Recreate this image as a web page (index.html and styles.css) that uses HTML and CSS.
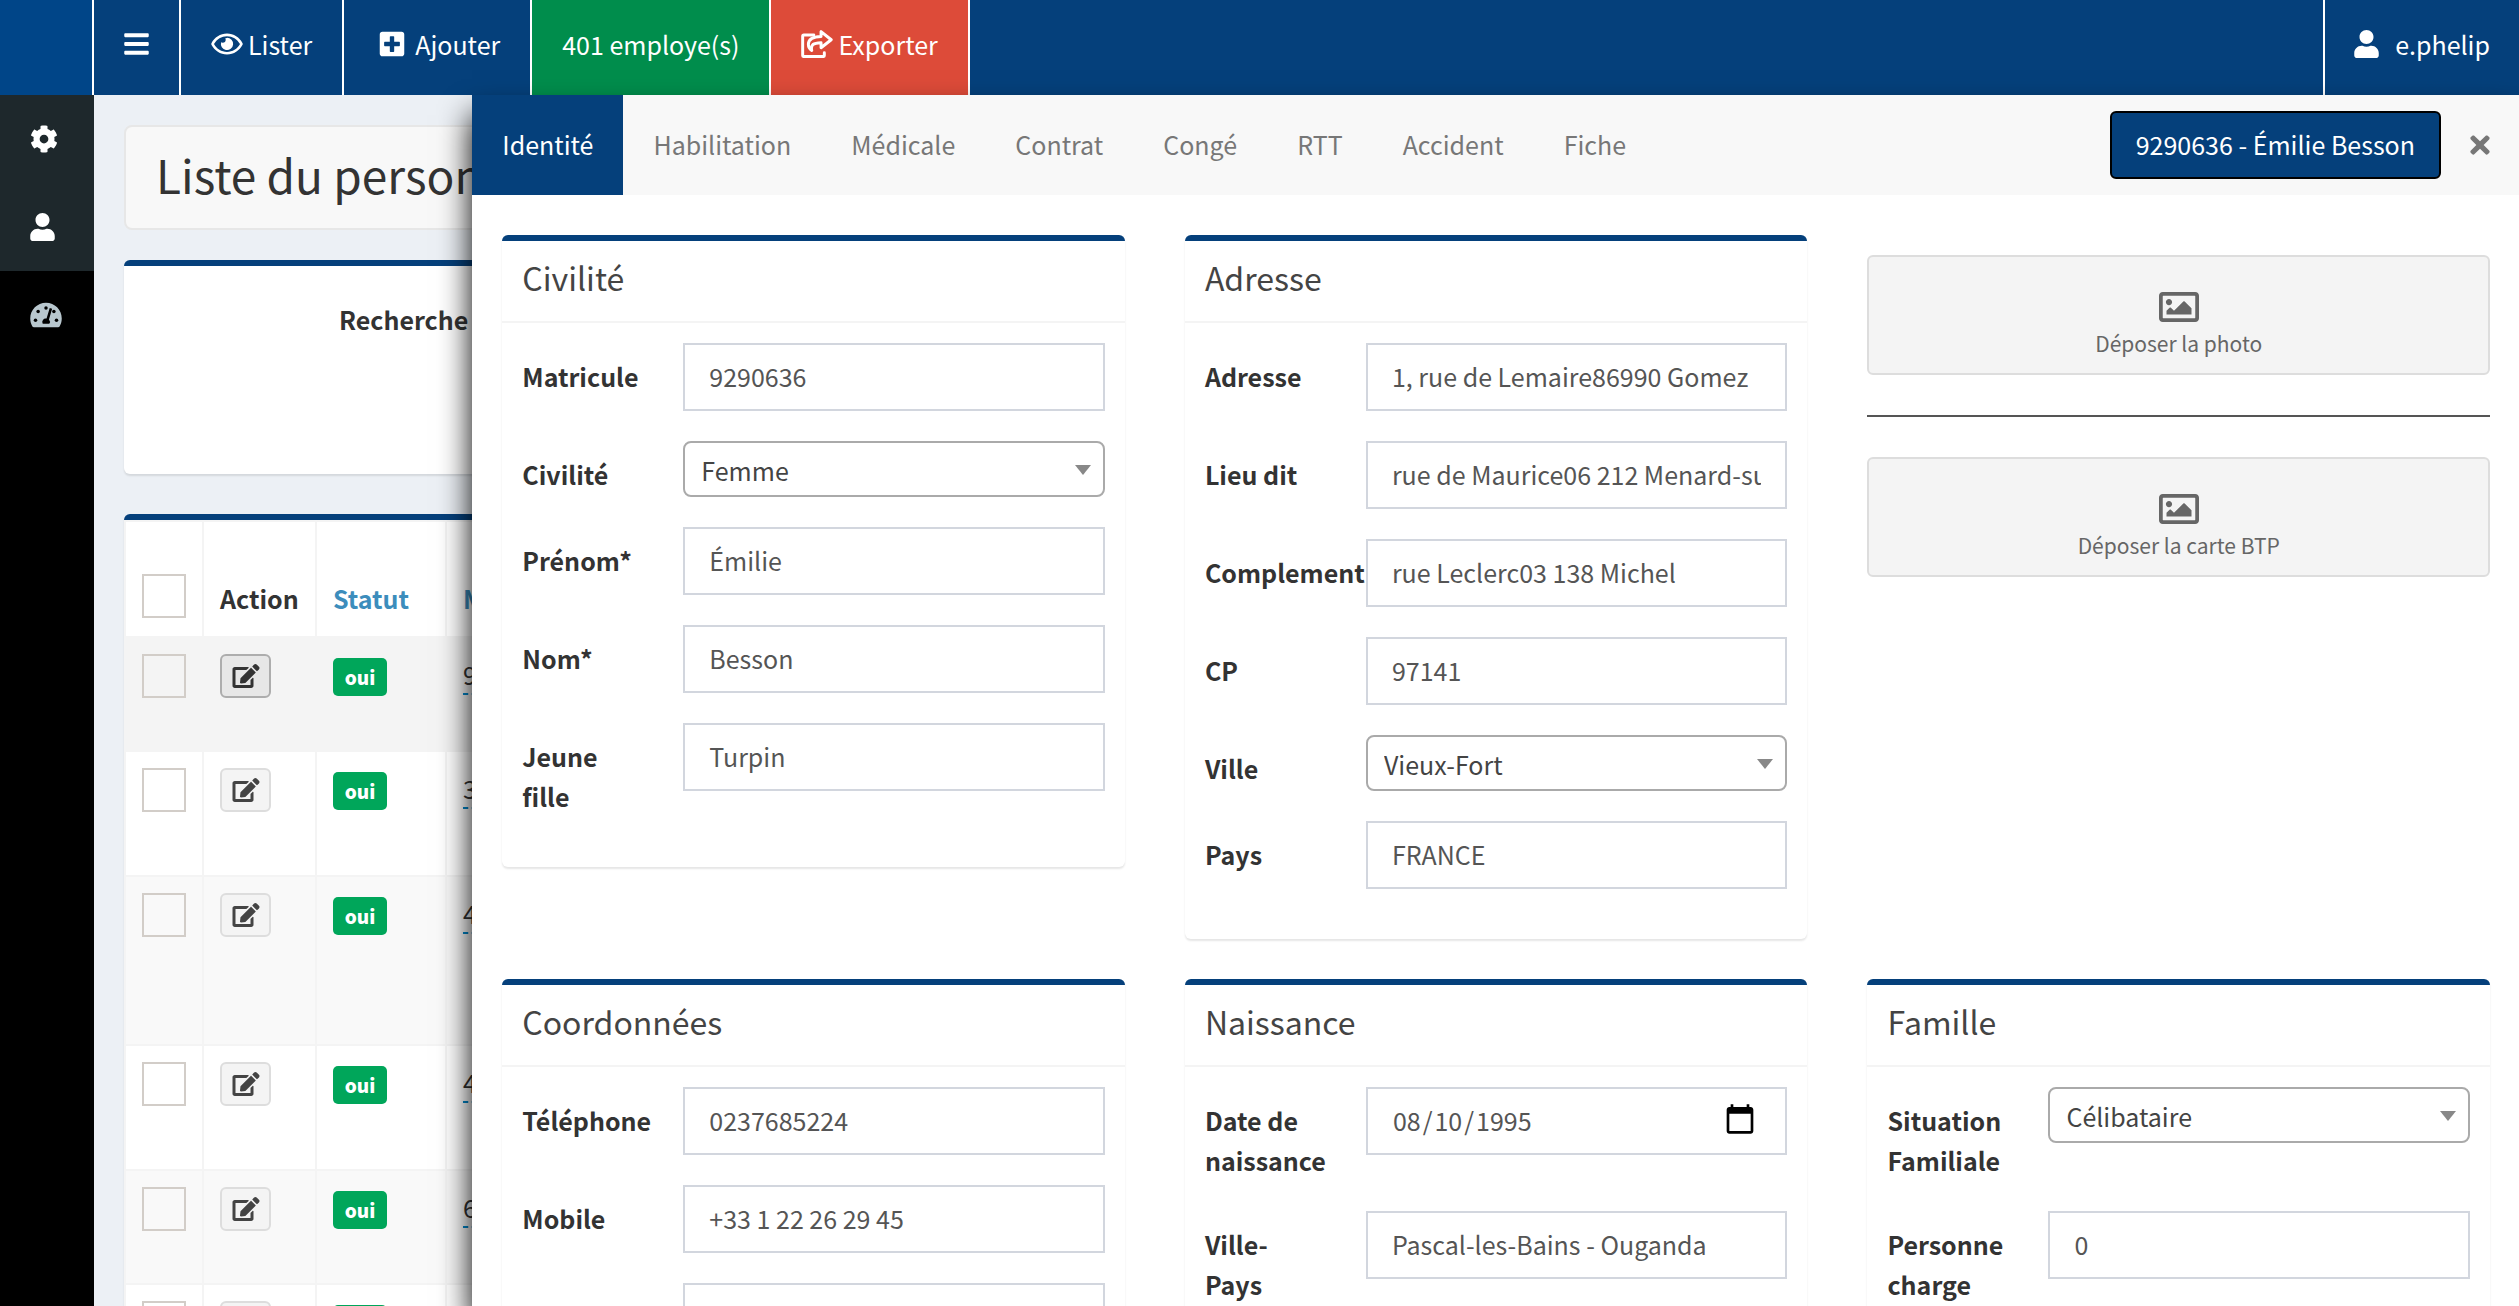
FILE: index.html
```
<!DOCTYPE html>
<html lang="fr">
<head>
    <meta charset="UTF-8">
    <meta name="viewport" content="width=device-width, initial-scale=1.0">
    <title>Liste du personnel</title>
    <link rel="stylesheet" href="styles.css">
</head>
<body>
    <svg class="sprite" aria-hidden="true">
        <symbol id="i-bars" viewBox="0 0 448 512"><path d="M16 132h416c8.837 0 16-7.163 16-16V76c0-8.837-7.163-16-16-16H16C7.163 60 0 67.163 0 76v40c0 8.837 7.163 16 16 16zm0 160h416c8.837 0 16-7.163 16-16v-40c0-8.837-7.163-16-16-16H16c-8.837 0-16 7.163-16 16v40c0 8.837 7.163 16 16 16zm0 160h416c8.837 0 16-7.163 16-16v-40c0-8.837-7.163-16-16-16H16c-8.837 0-16 7.163-16 16v40c0 8.837 7.163 16 16 16z"/></symbol>
        <symbol id="i-eye" viewBox="0 0 576 512"><path d="M288 144a110.94 110.94 0 0 0-31.24 5 55.4 55.4 0 0 1 7.24 27 56 56 0 0 1-56 56 55.4 55.4 0 0 1-27-7.24A111.71 111.71 0 1 0 288 144zm284.52 97.4C518.29 135.59 410.93 64 288 64S57.68 135.64 3.48 241.41a32.35 32.35 0 0 0 0 29.19C57.71 376.41 165.07 448 288 448s230.32-71.64 284.52-177.41a32.35 32.35 0 0 0 0-29.19zM288 400c-98.65 0-189.09-55-237.93-144C98.91 167 189.34 112 288 112s189.09 55 237.93 144C477.1 345 386.66 400 288 400z"/></symbol>
        <symbol id="i-plus" viewBox="0 0 448 512"><path d="M400 32H48C21.5 32 0 53.5 0 80v352c0 26.5 21.5 48 48 48h352c26.5 0 48-21.5 48-48V80c0-26.5-21.5-48-48-48zm-32 252c0 6.6-5.4 12-12 12h-92v92c0 6.6-5.4 12-12 12h-56c-6.6 0-12-5.4-12-12v-92H92c-6.6 0-12-5.4-12-12v-56c0-6.6 5.4-12 12-12h92v-92c0-6.6 5.4-12 12-12h56c6.6 0 12 5.4 12 12v92h92c6.6 0 12 5.4 12 12v56z"/></symbol>
        <symbol id="i-share" viewBox="0 0 576 512"><g fill="none" stroke="currentColor" stroke-width="54" stroke-linejoin="round" stroke-linecap="round"><path d="M230 90H48a22 22 0 0 0-22 22v352a22 22 0 0 0 22 22h352a22 22 0 0 0 22-22v-48"/><path d="M362 30v88C220 122 130 160 130 262c0 54 24 88 62 112-22-104 26-138 170-142v92l186-146z"/></g></symbol>
        <symbol id="i-user" viewBox="0 0 448 512"><path d="M224 256c70.7 0 128-57.3 128-128S294.7 0 224 0 96 57.3 96 128s57.3 128 128 128zm89.6 32h-16.7c-22.2 10.2-46.9 16-72.9 16s-50.6-5.8-72.9-16h-16.7C60.2 288 0 348.2 0 422.4V464c0 26.5 21.5 48 48 48h352c26.5 0 48-21.5 48-48v-41.6c0-74.2-60.2-134.4-134.4-134.4z"/></symbol>
        <symbol id="i-cog" viewBox="0 0 512 512"><path d="M487.4 315.7l-42.6-24.6c4.3-23.2 4.3-47 0-70.2l42.6-24.6c4.9-2.8 7.1-8.6 5.5-14-11.1-35.6-30-67.8-54.7-94.6-3.8-4.1-10-5.1-14.8-2.3L380.8 110c-17.9-15.4-38.5-27.3-60.8-35.1V25.8c0-5.6-3.9-10.5-9.4-11.7-36.7-8.2-74.3-7.8-109.2 0-5.5 1.2-9.4 6.1-9.4 11.7V75c-22.2 7.9-42.8 19.8-60.8 35.1L88.7 85.5c-4.9-2.8-11-1.9-14.8 2.3-24.7 26.7-43.6 58.9-54.7 94.6-1.7 5.4.6 11.2 5.5 14L67.3 221c-4.3 23.2-4.3 47 0 70.2l-42.6 24.6c-4.9 2.8-7.1 8.6-5.5 14 11.1 35.6 30 67.8 54.7 94.6 3.8 4.1 10 5.1 14.8 2.3l42.6-24.6c17.9 15.4 38.5 27.3 60.8 35.1v49.2c0 5.6 3.9 10.5 9.4 11.7 36.7 8.2 74.3 7.8 109.2 0 5.5-1.2 9.4-6.1 9.4-11.7v-49.2c22.2-7.9 42.8-19.8 60.8-35.1l42.6 24.6c4.9 2.8 11 1.9 14.8-2.3 24.7-26.7 43.6-58.9 54.7-94.6 1.5-5.5-.7-11.3-5.6-14.1zM256 336c-44.1 0-80-35.9-80-80s35.9-80 80-80 80 35.9 80 80-35.9 80-80 80z"/></symbol>
        <symbol id="i-dash" viewBox="0 0 576 512"><path d="M288 32C128.940 32 0 160.940 0 320c0 52.800 14.250 102.260 39.060 144.800 5.610 9.620 16.300 15.200 27.440 15.200h443c11.140 0 21.830-5.580 27.440-15.200C561.750 422.260 576 372.800 576 320c0-159.060-128.940-288-288-288z"/><g fill="#000"><circle cx="96" cy="352" r="32"/><circle cx="144" cy="192" r="32"/><circle cx="288" cy="128" r="32"/><circle cx="432" cy="192" r="32"/><circle cx="480" cy="352" r="32"/><path d="M356 126l44 14-58 196a64 64 0 0 1 6 80H228a64 64 0 0 1 70-94z"/></g></symbol>
        <symbol id="i-edit" viewBox="0 0 576 512"><path d="M402.6 83.2l90.2 90.2c3.8 3.8 3.8 10 0 13.8L274.4 405.6l-92.8 10.3c-12.4 1.4-22.9-9.1-21.5-21.5l10.3-92.8L388.8 83.2c3.8-3.8 10-3.8 13.8 0zm162-22.9l-48.8-48.8c-15.2-15.2-39.9-15.2-55.2 0l-35.4 35.4c-3.8 3.8-3.8 10 0 13.8l90.2 90.2c3.8 3.8 10 3.8 13.8 0l35.4-35.4c15.2-15.3 15.2-40 0-55.2zM384 346.2V448H64V128h229.8c3.2 0 6.2-1.3 8.5-3.5l40-40c7.6-7.6 2.2-20.500-8.500-20.500H48C21.500 64 0 85.500 0 112v352c0 26.500 21.500 48 48 48h352c26.500 0 48-21.500 48-48V306.200c0-10.700-12.900-16-20.500-8.500l-40 40c-2.200 2.300-3.500 5.300-3.500 8.500z"/></symbol>
        <symbol id="i-image" viewBox="0 0 512 512"><path d="M464 64H48C21.490 64 0 85.490 0 112v288c0 26.510 21.490 48 48 48h416c26.510 0 48-21.490 48-48V112c0-26.510-21.490-48-48-48zm-6 336H54a6 6 0 0 1-6-6V118a6 6 0 0 1 6-6h404a6 6 0 0 1 6 6v276a6 6 0 0 1-6 6zM128 152c-22.091 0-40 17.909-40 40s17.909 40 40 40 40-17.909 40-40-17.909-40-40-40zM96 352h320v-80l-87.515-87.515c-4.686-4.686-12.284-4.686-16.971 0L192 304l-39.515-39.515c-4.686-4.686-12.284-4.686-16.971 0L96 304v48z"/></symbol>
        <symbol id="i-times" viewBox="0 0 352 512"><path d="M242.720 256l100.070-100.070c12.280-12.280 12.280-32.190 0-44.480l-22.240-22.240c-12.280-12.280-32.190-12.280-44.480 0L176 189.280 75.930 89.210c-12.280-12.280-32.190-12.280-44.480 0L9.210 111.450c-12.280 12.280-12.280 32.190 0 44.480L109.280 256 9.210 356.070c-12.280 12.280-12.280 32.190 0 44.480l22.240 22.240c12.280 12.280 32.200 12.280 44.480 0L176 322.720l100.070 100.070c12.280 12.280 32.200 12.280 44.480 0l22.240-22.240c12.280-12.280 12.280-32.190 0-44.480L242.720 256z"/></symbol>
    </svg>

    <header class="topbar">
        <a class="logo" href="#" aria-label="Accueil"></a>
        <nav class="topbar-menu">
            <a href="#" aria-label="Menu"><svg class="icon w25"><use href="#i-bars"/></svg></a>
            <a href="#"><svg class="icon w32"><use href="#i-eye"/></svg>Lister</a>
            <a href="#"><svg class="icon w36"><use href="#i-plus"/></svg>Ajouter</a>
            <a class="bg-green" href="#">401 employe(s)</a>
            <a class="bg-red" href="#"><svg class="icon w32"><use href="#i-share"/></svg>Exporter</a>
        </nav>
        <a class="topbar-user" href="#"><svg class="icon w25"><use href="#i-user"/></svg>e.phelip</a>
    </header>

    <div class="wrapper">
        <aside class="sidebar">
            <div class="sidebar-active">
                <a href="#" aria-label="Paramètres"><svg class="icon w28"><use href="#i-cog"/></svg></a>
                <a href="#" aria-label="Personnel"><svg class="icon w25"><use href="#i-user"/></svg></a>
            </div>
            <a class="muted" href="#" aria-label="Tableau de bord"><svg class="icon w32"><use href="#i-dash"/></svg></a>
        </aside>

        <main class="content">
            <h1 class="page-title">Liste du personnel</h1>

            <section class="box search-box">
                <label class="search-label">Recherche</label>
            </section>

            <section class="box">
                <table class="list">
                    <colgroup>
                        <col class="col-check">
                        <col class="col-action">
                        <col class="col-statut">
                        <col>
                    </colgroup>
                    <thead>
                        <tr>
                            <th><input class="check" type="checkbox" aria-label="Tout"></th>
                            <th>Action</th>
                            <th><a href="#">Statut</a></th>
                            <th><a href="#">Matricule</a></th>
                        </tr>
                    </thead>
                    <tbody>
                        <tr class="row-s selected">
                            <td><input class="check" type="checkbox" aria-label="Ligne 1"></td>
                            <td><button class="btn-edit" type="button" aria-label="Modifier"><svg class="icon w28"><use href="#i-edit"/></svg></button></td>
                            <td><span class="tag">oui</span></td>
                            <td><a class="editable" href="#">9</a></td>
                        </tr>
                        <tr class="row-m">
                            <td><input class="check" type="checkbox" aria-label="Ligne 2"></td>
                            <td><button class="btn-edit" type="button" aria-label="Modifier"><svg class="icon w28"><use href="#i-edit"/></svg></button></td>
                            <td><span class="tag">oui</span></td>
                            <td><a class="editable" href="#">3</a></td>
                        </tr>
                        <tr class="row-l">
                            <td><input class="check" type="checkbox" aria-label="Ligne 3"></td>
                            <td><button class="btn-edit" type="button" aria-label="Modifier"><svg class="icon w28"><use href="#i-edit"/></svg></button></td>
                            <td><span class="tag">oui</span></td>
                            <td><a class="editable" href="#">4</a></td>
                        </tr>
                        <tr class="row-m">
                            <td><input class="check" type="checkbox" aria-label="Ligne 4"></td>
                            <td><button class="btn-edit" type="button" aria-label="Modifier"><svg class="icon w28"><use href="#i-edit"/></svg></button></td>
                            <td><span class="tag">oui</span></td>
                            <td><a class="editable" href="#">4</a></td>
                        </tr>
                        <tr class="row-s">
                            <td><input class="check" type="checkbox" aria-label="Ligne 5"></td>
                            <td><button class="btn-edit" type="button" aria-label="Modifier"><svg class="icon w28"><use href="#i-edit"/></svg></button></td>
                            <td><span class="tag">oui</span></td>
                            <td><a class="editable" href="#">6</a></td>
                        </tr>
                        <tr class="row-m">
                            <td><input class="check" type="checkbox" aria-label="Ligne 6"></td>
                            <td><button class="btn-edit" type="button" aria-label="Modifier"><svg class="icon w28"><use href="#i-edit"/></svg></button></td>
                            <td><span class="tag">oui</span></td>
                            <td></td>
                        </tr>
                    </tbody>
                </table>
            </section>
        </main>
    </div>

    <!-- panneau de la fiche employé, par dessus la liste -->
    <section class="drawer">
        <nav class="tabs">
            <a class="active" href="#">Identité</a>
            <a href="#">Habilitation</a>
            <a href="#">Médicale</a>
            <a href="#">Contrat</a>
            <a href="#">Congé</a>
            <a href="#">RTT</a>
            <a href="#">Accident</a>
            <a href="#">Fiche</a>
            <div class="tabs-right">
                <button class="btn-name" type="button">9290636 - Émilie Besson</button>
                <button class="btn-close" type="button" aria-label="Fermer"><svg class="icon w20"><use href="#i-times"/></svg></button>
            </div>
        </nav>

        <form class="cards">
            <section class="box">
                <h2 class="box-title">Civilité</h2>
                <div class="box-body">
                    <div class="field">
                        <label for="matricule">Matricule</label>
                        <input id="matricule" type="text" value="9290636">
                    </div>
                    <div class="field">
                        <label for="civilite">Civilité</label>
                        <div class="select"><select id="civilite"><option>Femme</option></select></div>
                    </div>
                    <div class="field">
                        <label for="prenom">Prénom*</label>
                        <input id="prenom" type="text" value="Émilie">
                    </div>
                    <div class="field">
                        <label for="nom">Nom*</label>
                        <input id="nom" type="text" value="Besson">
                    </div>
                    <div class="field">
                        <label for="jeune-fille">Jeune fille</label>
                        <input id="jeune-fille" type="text" value="Turpin">
                    </div>
                </div>
            </section>

            <section class="box">
                <h2 class="box-title">Adresse</h2>
                <div class="box-body">
                    <div class="field">
                        <label for="adresse">Adresse</label>
                        <input id="adresse" type="text" value="1, rue de Lemaire86990 Gomez">
                    </div>
                    <div class="field">
                        <label for="lieu-dit">Lieu dit</label>
                        <input id="lieu-dit" type="text" value="rue de Maurice06 212 Menard-sur-Mer">
                    </div>
                    <div class="field">
                        <label for="complement">Complement</label>
                        <input id="complement" type="text" value="rue Leclerc03 138 Michel">
                    </div>
                    <div class="field">
                        <label for="cp">CP</label>
                        <input id="cp" type="text" value="97141">
                    </div>
                    <div class="field">
                        <label for="ville">Ville</label>
                        <div class="select"><select id="ville"><option>Vieux-Fort</option></select></div>
                    </div>
                    <div class="field">
                        <label for="pays">Pays</label>
                        <input id="pays" type="text" value="FRANCE">
                    </div>
                </div>
            </section>

            <div class="uploads">
                <button class="btn-upload" type="button"><svg class="icon w40"><use href="#i-image"/></svg>Déposer la photo</button>
                <hr>
                <button class="btn-upload" type="button"><svg class="icon w40"><use href="#i-image"/></svg>Déposer la carte BTP</button>
            </div>

            <section class="box">
                <h2 class="box-title">Coordonnées</h2>
                <div class="box-body">
                    <div class="field">
                        <label for="telephone">Téléphone</label>
                        <input id="telephone" type="text" value="0237685224">
                    </div>
                    <div class="field">
                        <label for="mobile">Mobile</label>
                        <input id="mobile" type="text" value="+33 1 22 26 29 45">
                    </div>
                    <div class="field">
                        <label for="email"></label>
                        <input id="email" type="text" aria-label="Email">
                    </div>
                </div>
            </section>

            <section class="box">
                <h2 class="box-title">Naissance</h2>
                <div class="box-body">
                    <div class="field">
                        <label for="date-naissance">Date de naissance</label>
                        <input id="date-naissance" type="date" value="1995-08-10">
                    </div>
                    <div class="field">
                        <label for="ville-pays">Ville-Pays</label>
                        <input id="ville-pays" type="text" value="Pascal-les-Bains - Ouganda">
                    </div>
                </div>
            </section>

            <section class="box">
                <h2 class="box-title">Famille</h2>
                <div class="box-body">
                    <div class="field">
                        <label for="situation">Situation Familiale</label>
                        <div class="select"><select id="situation"><option>Célibataire</option></select></div>
                    </div>
                    <div class="field">
                        <label for="charge">Personne charge</label>
                        <input id="charge" type="text" value="0">
                    </div>
                </div>
            </section>
        </form>
    </section>
</body>
</html>
```
FILE: styles.css
```
* {
    box-sizing: border-box;
}

body {
    display: flex;
    flex-direction: column;
    height: 100vh;
    margin: 0;
    overflow: hidden;
    background-color: #ecf0f5;
    font-family: "Noto Sans CJK SC", "Open Sans", sans-serif;
    font-size: 25px;
    line-height: 40px;
    color: #333;
}

a {
    color: inherit;
    text-decoration: none;
}

button, input, select {
    font: inherit;
}

.sprite {
    position: absolute;
    width: 0;
    height: 0;
}

/* icons */
.icon {
    flex: none;
    height: 28px;
    fill: currentColor;
}

.w20 { width: 20px; }
.w25 { width: 25px; }
.w28 { width: 28px; }
.w32 { width: 32px; }
.w36 { width: 36px; }
.w40 { width: 40px; height: 40px; }

/* top bar */
.topbar {
    display: flex;
    flex: none;
    height: 95px;
    background-color: #05407b;
    color: white;
}

.logo {
    width: 94px;
    border-right: 2px solid white;
    background-color: #004588;
}

.topbar-menu {
    display: flex;
    flex: 1;
}

.topbar-menu a, .topbar-user {
    display: flex;
    align-items: center;
    gap: 5px;
    padding: 0 30px 7px;
    border-right: 2px solid white;
}

.topbar-user {
    gap: 16px;
    padding: 0 29px 7px;
    border-right: 0;
    border-left: 2px solid white;
}

.bg-green {
    background-color: #008d4c;
}

.bg-red {
    background-color: #dd4b39;
}

/* sidebar */
.wrapper {
    display: flex;
    flex: 1;
    min-height: 0;
}

.sidebar {
    width: 94px;
    background-color: black;
    color: white;
}

.sidebar a {
    display: flex;
    align-items: center;
    height: 88px;
    padding-left: 30px;
}

.sidebar-active {
    background-color: #1e282c;
}

.muted {
    color: #b8c7ce;
}

/* page */
.content {
    flex: 1;
    min-width: 0;
    padding: 30px;
}

.page-title {
    margin: 0 0 30px;
    padding: 13px 30px 19px;
    border: 2px solid #e7e7e7;
    border-radius: 8px;
    background-color: #f8f8f8;
    font-size: 46px;
    font-weight: 400;
    line-height: 69px;
}

.box {
    margin-bottom: 40px;
    border-top: 6px solid #05407b;
    border-radius: 6px;
    background-color: white;
    box-shadow: 0 2px 2px rgba(0, 0, 0, 0.1);
}

.search-box {
    min-height: 214px;
    padding: 33px 215px;
    font-weight: 700;
}

.list {
    width: 100%;
    table-layout: fixed;
    border-collapse: collapse;
    background-color: white;
}

.list th, .list td {
    padding: 16px;
    border: 2px solid #f4f4f4;
    text-align: left;
    vertical-align: top;
}

.list th {
    height: 116px;
    padding-bottom: 18px;
    vertical-align: bottom;
}

.list th a {
    color: #3c8dbc;
}

.col-check { width: 78px; }
.col-action { width: 113px; }
.col-statut { width: 130px; }

.row-s { height: 114px; }
.row-m { height: 125px; }
.row-l { height: 169px; }

.list tbody tr:nth-child(odd) {
    background-color: #f9f9f9;
}

.list tbody tr.selected {
    background-color: #f4f4f4;
}

.check {
    display: block;
    width: 44px;
    height: 44px;
    margin: 0;
    border: 2px solid #d2cdc8;
    appearance: none;
}

.btn-edit {
    display: flex;
    align-items: center;
    justify-content: center;
    width: 51px;
    height: 44px;
    padding: 0;
    border: 2px solid #ddd;
    border-radius: 6px;
    background-color: #f4f4f4;
    color: #444;
}

.btn-edit .icon {
    height: 24px;
}

.selected .btn-edit {
    border-color: #adadad;
    background-color: #e7e7e7;
    color: #333;
}

.tag {
    display: block;
    width: 54px;
    margin-top: 4px;
    border-radius: 5px;
    background-color: #00a65a;
    color: white;
    font-size: 19px;
    font-weight: 900;
    line-height: 38px;
    text-align: center;
}

.editable {
    display: inline-block;
    border-bottom: 2px dashed #08c;
    line-height: 37px;
}

/* drawer */
.drawer {
    position: fixed;
    top: 95px;
    right: 0;
    bottom: 0;
    width: 81.25%;
    overflow-y: auto;
    scrollbar-width: none;
    background-color: white;
    box-shadow: 0 20px 30px black;
}

.tabs {
    display: flex;
    background-color: #f8f8f8;
    color: #777;
}

.tabs a {
    padding: 29px 30px 31px;
}

.tabs a.active {
    background-color: #05407b;
    color: white;
}

.tabs-right {
    display: flex;
    align-items: center;
    gap: 29px;
    margin-left: auto;
    padding-right: 29px;
}

.btn-name {
    height: 68px;
    padding: 0 24px 2px;
    border: 2px solid black;
    border-radius: 6px;
    background-color: #05407b;
    color: white;
}

.btn-close {
    display: flex;
    padding: 0;
    border: 0;
    background: none;
    color: #777;
}

.cards {
    display: grid;
    grid-template-columns: repeat(3, 1fr);
    align-items: start;
    column-gap: 60px;
    padding: 40px 29px 40px 30px;
}

.box-title {
    margin: 0;
    padding: 16px 20px 24px;
    border-bottom: 2px solid #f4f4f4;
    color: #444;
    font-size: 32px;
    font-weight: 400;
    line-height: 40px;
}

.box-body {
    padding: 20px;
}

.field {
    display: grid;
    grid-template-columns: 101px minmax(0, 1fr);
    align-items: start;
    column-gap: 60px;
    margin-bottom: 30px;
}

.field label {
    padding: 13px 0 1px;
    font-weight: 700;
}

.field input {
    width: 100%;
    height: 68px;
    padding: 11px 24px 13px;
    border: 2px solid #d2d6de;
    background-color: white;
    color: #555;
}

.field input::-webkit-datetime-edit-text {
    padding: 0 1px;
}

.field input::-webkit-calendar-picker-indicator {
    width: 34px;
    height: 34px;
    margin-right: 4px;
    padding: 0;
}

.select {
    position: relative;
}

.select select {
    display: block;
    width: 100%;
    height: 56px;
    padding: 2px 40px 0 16px;
    border: 2px solid #aaa;
    border-radius: 8px;
    background-color: white;
    color: #444;
    appearance: none;
}

.select::after {
    content: "";
    position: absolute;
    top: 24px;
    right: 14px;
    border: 8px solid transparent;
    border-top: 10px solid #888;
    border-bottom: 0;
}

.uploads {
    padding-top: 20px;
}

.uploads hr {
    margin: 40px 0;
    border: 0;
    border-top: 2px solid #555;
}

.btn-upload {
    display: flex;
    flex-direction: column;
    align-items: center;
    width: 100%;
    height: 120px;
    padding: 30px 0 0;
    border: 2px solid #ddd;
    border-radius: 6px;
    background-color: #f4f4f4;
    color: #666;
    font-size: 21px;
    line-height: 32px;
}
```
